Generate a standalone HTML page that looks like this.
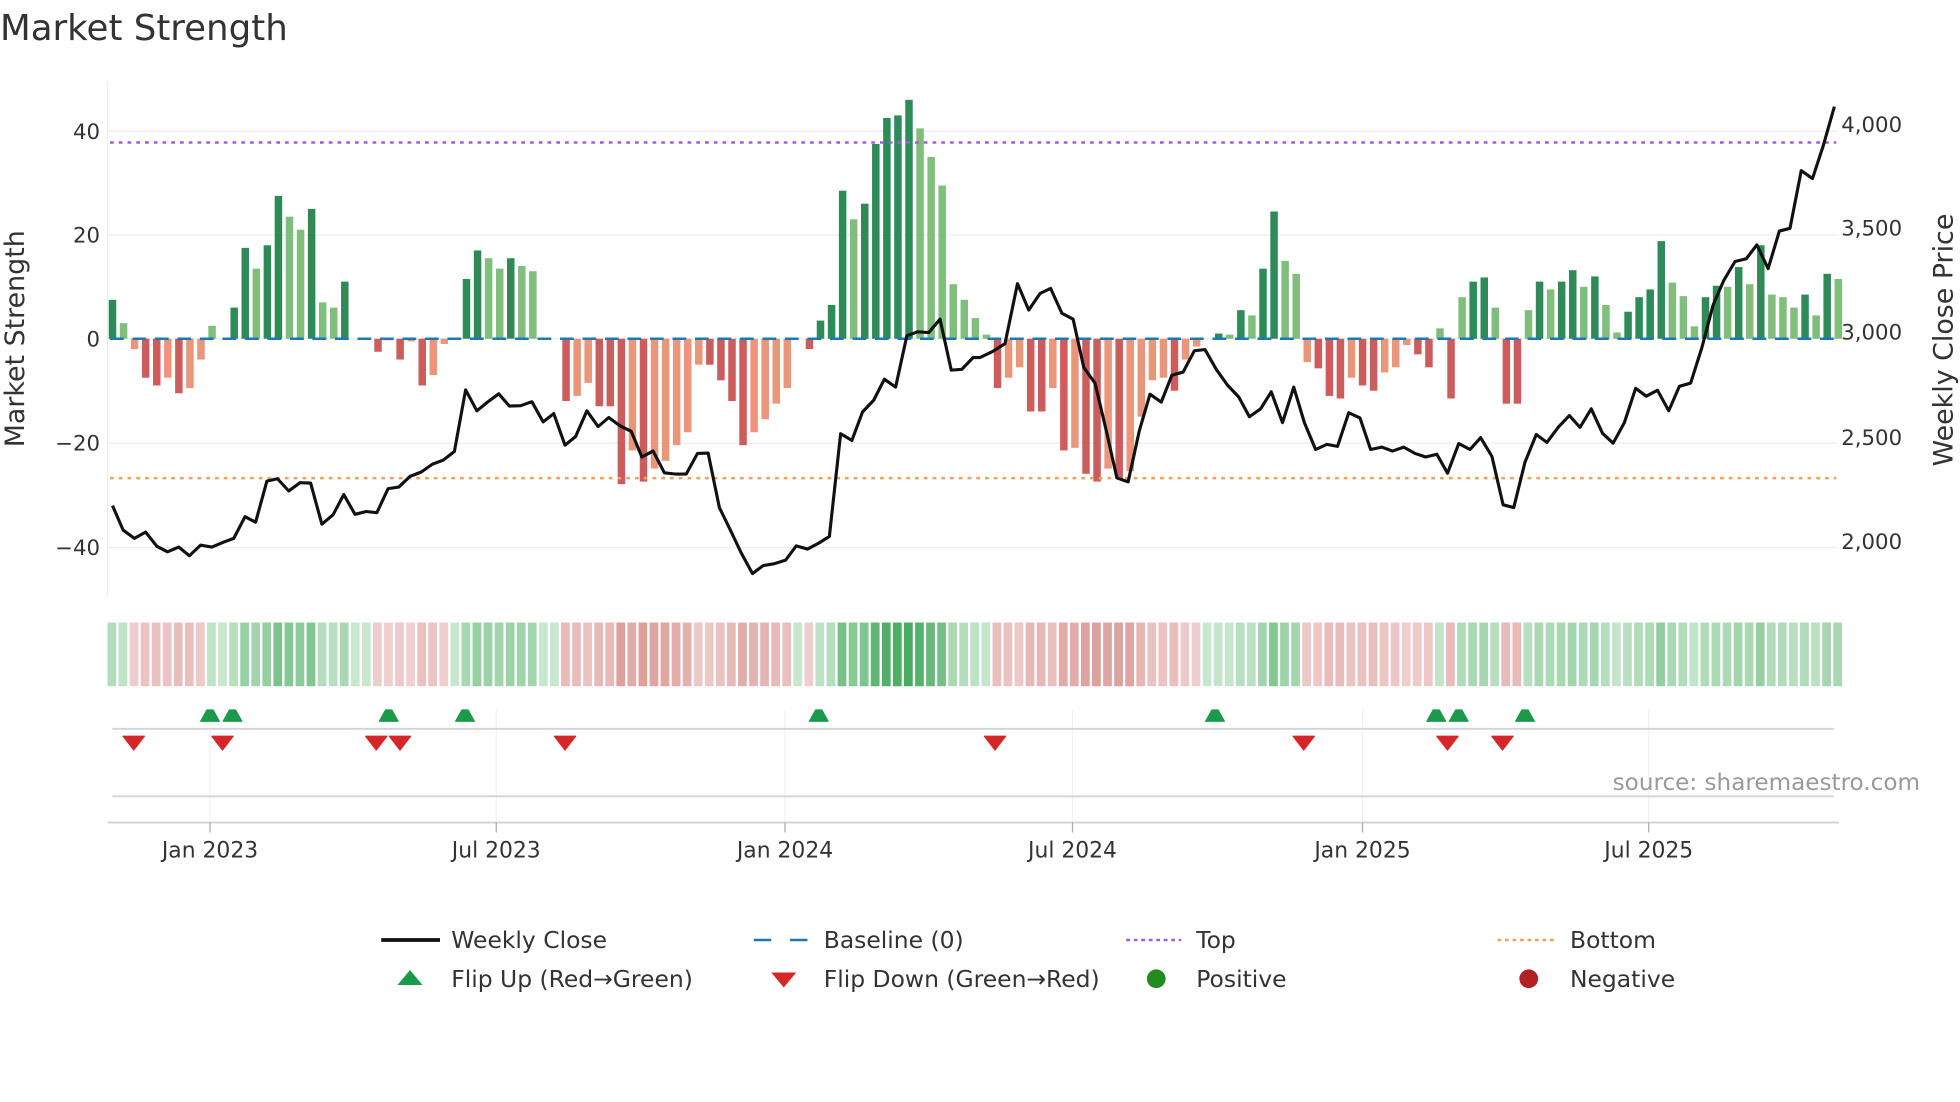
<!DOCTYPE html>
<html><head><meta charset="utf-8"><style>
html,body{margin:0;padding:0;background:#fff;}
svg{display:block;font-family:"DejaVu Sans","Liberation Sans",sans-serif;}
</style></head><body>
<svg id="s" width="1960" height="1102" viewBox="0 0 3136 1763.2" xmlns="http://www.w3.org/2000/svg">
<rect width="3136" height="1763.2" fill="#fff"/>
<text x="0" y="64" font-size="57" fill="#333">Market Strength</text>
<g stroke="#ececec" stroke-width="2">
<line x1="172" y1="210" x2="2940" y2="210"/>
<line x1="172" y1="376" x2="2940" y2="376"/>
<line x1="172" y1="542" x2="2940" y2="542"/>
<line x1="172" y1="709" x2="2940" y2="709"/>
<line x1="172" y1="876" x2="2940" y2="876"/>
</g>
<line x1="172" y1="130" x2="172" y2="955" stroke="#eee" stroke-width="2"/>
<g font-size="34" fill="#333" text-anchor="end">
<text x="160" y="222">40</text>
<text x="160" y="388">20</text>
<text x="160" y="554">0</text>
<text x="160" y="721">−20</text>
<text x="160" y="888">−40</text>
</g>
<g font-size="34" fill="#333" text-anchor="start">
<text x="2946" y="211">4,000</text>
<text x="2946" y="377">3,500</text>
<text x="2946" y="543">3,000</text>
<text x="2946" y="712">2,500</text>
<text x="2946" y="878">2,000</text>
</g>
<text transform="translate(38,542) rotate(-90)" font-size="43" fill="#333" text-anchor="middle">Market Strength</text>
<text transform="translate(3124,544) rotate(-90)" font-size="43" fill="#333" text-anchor="middle">Weekly Close Price</text>
<g id="bars"></g>
<line x1="176" y1="542" x2="2938" y2="542" stroke="#1f77b4" stroke-width="4" stroke-dasharray="22,14"/>
<line x1="176" y1="228" x2="2938" y2="228" stroke="#9b5fe0" stroke-width="4" stroke-dasharray="6,8"/>
<line x1="176" y1="765" x2="2938" y2="765" stroke="#f0a060" stroke-width="4" stroke-dasharray="6,8"/>
<polyline id="price" fill="none" stroke="#111" stroke-width="5" stroke-linejoin="round"/>
<g id="heat"></g>
<g stroke="#eef0f2" stroke-width="2">
<line x1="336" y1="1135" x2="336" y2="1320"/><line x1="794" y1="1135" x2="794" y2="1320"/>
<line x1="1256" y1="1135" x2="1256" y2="1320"/><line x1="1716" y1="1135" x2="1716" y2="1320"/>
<line x1="2180" y1="1135" x2="2180" y2="1320"/><line x1="2638" y1="1135" x2="2638" y2="1320"/>
</g>
<line x1="180" y1="1166" x2="2934" y2="1166" stroke="#d0d3d6" stroke-width="3"/>
<line x1="180" y1="1274" x2="2934" y2="1274" stroke="#d0d3d6" stroke-width="3"/>
<line x1="172" y1="1316" x2="2942" y2="1316" stroke="#d0d3d6" stroke-width="3"/>
<g stroke="#aaa" stroke-width="2">
<line x1="336" y1="1316" x2="336" y2="1332"/><line x1="794" y1="1316" x2="794" y2="1332"/>
<line x1="1256" y1="1316" x2="1256" y2="1332"/><line x1="1716" y1="1316" x2="1716" y2="1332"/>
<line x1="2180" y1="1316" x2="2180" y2="1332"/><line x1="2638" y1="1316" x2="2638" y2="1332"/>
</g>
<g id="marks"></g>
<text x="3072" y="1264" font-size="37" fill="#999" text-anchor="end">source: sharemaestro.com</text>
<g font-size="35" fill="#333" text-anchor="middle">
<text x="336" y="1372">Jan 2023</text><text x="794" y="1372">Jul 2023</text>
<text x="1256" y="1372">Jan 2024</text><text x="1716" y="1372">Jul 2024</text>
<text x="2180" y="1372">Jan 2025</text><text x="2638" y="1372">Jul 2025</text>
</g>
<g font-size="37.5" fill="#333">
<line x1="610" y1="1504" x2="704" y2="1504" stroke="#111" stroke-width="6"/>
<text x="722" y="1517">Weekly Close</text>
<line x1="1206" y1="1504" x2="1292" y2="1504" stroke="#1f77b4" stroke-width="4" stroke-dasharray="28,30"/>
<text x="1318" y="1517">Baseline (0)</text>
<line x1="1802" y1="1504" x2="1890" y2="1504" stroke="#9b5fe0" stroke-width="4" stroke-dasharray="6,6"/>
<text x="1914" y="1517">Top</text>
<line x1="2396" y1="1504" x2="2486" y2="1504" stroke="#f0a060" stroke-width="4" stroke-dasharray="6,6"/>
<text x="2512" y="1517">Bottom</text>
<polygon points="656,1552 676,1576 636,1576" fill="#1a9a4a"/>
<text x="722" y="1579">Flip Up (Red→Green)</text>
<polygon points="1234,1556 1274,1556 1254,1580" fill="#d62728"/>
<text x="1318" y="1579">Flip Down (Green→Red)</text>
<circle cx="1850" cy="1566" r="15" fill="#228b22"/>
<text x="1914" y="1579">Positive</text>
<circle cx="2446" cy="1566" r="15" fill="#b22222"/>
<text x="2512" y="1579">Negative</text>
</g>
</svg>
<script>
var v=[7.5,3,-2,-7.5,-9,-7.5,-10.5,-9.5,-4,2.5,0,6,17.5,13.5,18,27.5,23.5,21,25,7,6,11,0,0,-2.5,-0.3,-4,-0.5,-9,-7,-1,0,11.5,17,15.5,13.5,15.5,14,13,0,0,-12,-11,-8.5,-13,-13,-28,-21.5,-27.5,-25,-23.5,-20.5,-18,-5,-5,-8,-12,-20.5,-18,-15.5,-12.5,-9.5,0,-2,3.5,6.5,28.5,23,26,37.5,42.5,43,46,40.5,35,29.5,10.5,7.5,4,0.8,-9.5,-7.5,-5.5,-14,-14,-9.5,-21.5,-21,-26,-27.5,-25,-27,-25.5,-15,-8,-7.5,-10,-4,-1.5,0,1,0.8,5.5,4.5,13.5,24.5,15,12.5,-4.5,-5.7,-11,-11.5,-7.5,-9,-10,-6.5,-5.5,-1.2,-3,-5.5,2,-11.5,8,11,11.8,6,-12.5,-12.5,5.5,11,9.5,11,13.2,10,12,6.5,1.2,5.2,8,9.5,18.8,10.8,8.2,2.4,8,10.2,10,13.8,10.5,18,8.5,8,6,8.5,4.5,12.5,11.5];
var NS="http://www.w3.org/2000/svg",K=0.632;
function el(t,a,p){var e=document.createElementNS(NS,t);for(var k in a)e.setAttribute(k,a[k]);p.appendChild(e);return e;}
var B=document.getElementById('bars'),H=document.getElementById('heat');
for(var i=0;i<v.length;i++){var x=180+17.7*i,h=v[i]*13.15*K,prev=i?v[i-1]:0;
var c=v[i]>=0?(Math.abs(v[i])>=Math.abs(prev)?'#2e8b57':'#7fbf7b'):(Math.abs(v[i])>=Math.abs(prev)?'#cd5c5c':'#e9967a');
if(Math.abs(h)>0.5)el('rect',{x:x-6,y:h>0?542-h:542,width:12,height:Math.abs(h),fill:c},B);
var t=Math.min(Math.abs(v[i])/46,1)*0.75+0.18,col;
if(v[i]>=0){col='rgb('+Math.round(230-t*(230-60))+','+Math.round(245-t*(245-165))+','+Math.round(232-t*(232-85))+')';}
else{col='rgb('+Math.round(247-t*(247-205))+','+Math.round(228-t*(228-120))+','+Math.round(228-t*(228-115))+')';}
el('rect',{x:x-8,y:996,width:14,height:102,fill:col},H);}
var p1=[[180,1280],[197,1342],[215,1363],[233,1347],[251,1383],[268,1397],[286,1385],[303,1407],[321,1380],[339,1385],[357,1373],[374,1363],[392,1308],[409,1322],[427,1218],[444,1212],[462,1243],[480,1222],[497,1223],[515,1327],[533,1303],[550,1252],[568,1302],[586,1295],[603,1298],[621,1237],[638,1233],[656,1206],[674,1195],[692,1175],[709,1165],[727,1143],[745,987],[763,1040],[780,1018],[798,997],[815,1028],[833,1027],[851,1017],[869,1068],[886,1047],[904,1127],[921,1105],[939,1040],[957,1080],[974,1057],[992,1078],[1010,1092],[1027,1157],[1045,1142],[1063,1197],[1080,1200],[1098,1200],[1116,1148],[1133,1147],[1151,1285],[1168,1340],[1186,1400],[1204,1452],[1221,1432],[1239,1427],[1257,1418],[1274,1382],[1292,1390],[1310,1375],[1327,1358],[1345,1098],[1363,1115],[1380,1043],[1398,1013],[1415,960],[1433,980],[1451,850],[1468,840],[1486,842],[1504,808],[1522,937],[1539,935],[1557,905]];
var p2=[[0,905],[20,890],[40,870],[60,718],[78,785],[96,743],[113,730],[131,793],[149,808],[166,930],[184,970],[202,1090],[219,1210],[237,1220],[255,1090],[272,998],[290,1018],[307,950],[325,942],[343,888],[360,885],[378,935],[396,975],[414,1005],[431,1055],[449,1035],[466,992],[484,1070],[502,980],[519,1070],[537,1138],[555,1125],[572,1130],[590,1045],[608,1058],[625,1138],[643,1132],[660,1142],[678,1132],[696,1148],[713,1157],[731,1150],[748,1198],[766,1123],[784,1138],[801,1108],[819,1155],[837,1278],[854,1285],[872,1170],[890,1100],[907,1120],[925,1082],[943,1052],[960,1082],[978,1035],[996,1097],[1013,1122],[1031,1070],[1049,983],[1066,1003],[1084,988],[1102,1040],[1119,978],[1137,970],[1155,880],[1173,772],[1190,710],[1208,662],[1226,655],[1243,620],[1261,680],[1279,585],[1296,578],[1314,432],[1332,452],[1349,370],[1367,270]];
var pts=p1.map(function(p){return p[0]+','+(p[1]*K).toFixed(1);}).concat(p2.map(function(p){return (p[0]+1568)+','+(p[1]*K).toFixed(1);}));
document.getElementById('price').setAttribute('points',pts.join(' '));
var M=document.getElementById('marks');
[168,186,311,372,655,972,1149,1167,1220].forEach(function(x){x*=2;el('polygon',{points:(x-15)+',1154 '+(x-5)+',1136 '+(x+5)+',1136 '+(x+15)+',1154',fill:'#1a9a4a','stroke':'#1a9a4a','stroke-width':'2','stroke-linejoin':'round'},M);});
[107,178,301,320,452,796,1043,1158,1202].forEach(function(x){x*=2;el('polygon',{points:(x-17)+',1178 '+(x+17)+',1178 '+x+',1200',fill:'#d62728','stroke':'#d62728','stroke-width':'2','stroke-linejoin':'round'},M);});
</script>
</body></html>
